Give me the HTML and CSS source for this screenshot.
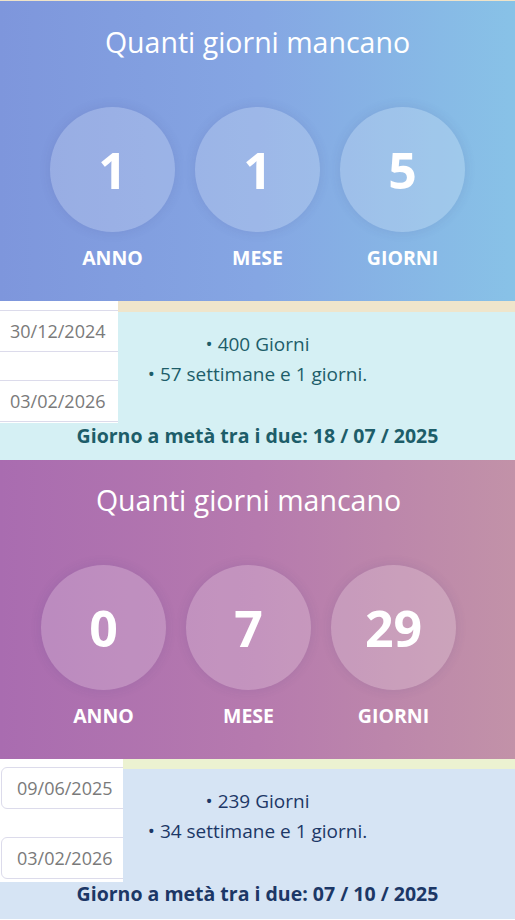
FILE: index.html
```html
<!DOCTYPE html>
<html lang="it">
  <head>
    <meta charset="UTF-8" />
    <meta name="viewport" content="width=device-width, initial-scale=1.0" />
    <title>Quanti giorni mancano</title>
    <link rel="stylesheet" href="styles.css">
  </head>
  <body>
    <section class="counter blue">
      <div class="counter-head">
        <h1>Quanti giorni mancano</h1>
        <div class="units">
          <div class="unit">
            <div class="circle">1</div>
            <span>Anno</span>
          </div>
          <div class="unit">
            <div class="circle">1</div>
            <span>Mese</span>
          </div>
          <div class="unit">
            <div class="circle">5</div>
            <span>Giorni</span>
          </div>
        </div>
      </div>
      <div class="result">
        <div class="dates">
          <input type="text" value="30/12/2024" readonly />
          <input type="text" value="03/02/2026" readonly />
        </div>
        <div class="result-body">
          <ul class="stats">
            <li>&bull; 400 Giorni</li>
            <li>&bull; 57 settimane e 1 giorni.</li>
          </ul>
          <p class="midpoint">Giorno a metà tra i due: 18 / 07 / 2025</p>
        </div>
      </div>
    </section>

    <section class="counter purple">
      <div class="counter-head">
        <h1>Quanti giorni mancano</h1>
        <div class="units">
          <div class="unit">
            <div class="circle">0</div>
            <span>Anno</span>
          </div>
          <div class="unit">
            <div class="circle">7</div>
            <span>Mese</span>
          </div>
          <div class="unit">
            <div class="circle">29</div>
            <span>Giorni</span>
          </div>
        </div>
      </div>
      <div class="result">
        <div class="dates">
          <input type="text" value="09/06/2025" readonly />
          <input type="text" value="03/02/2026" readonly />
        </div>
        <div class="result-body">
          <ul class="stats">
            <li>&bull; 239 Giorni</li>
            <li>&bull; 34 settimane e 1 giorni.</li>
          </ul>
          <p class="midpoint">Giorno a metà tra i due: 07 / 10 / 2025</p>
        </div>
      </div>
    </section>
  </body>
</html>
```

FILE: styles.css
```css
body {
  font-family: "Open Sans", "Noto Sans", sans-serif;
  margin: 0;
  padding: 0;
  border-top: 1px solid #efe3c8;
}
.counter-head {
  color: white;
  text-align: center;
  padding: 21px 0 33px;
}
.blue .counter-head {
  background: linear-gradient(to right, #7e96dc, #85a6e3 50%, #88c2e7);
}
.purple .counter-head {
  background: linear-gradient(to right, #a96cb0, #b67aae 50%, #c292a8);
  padding-right: 18px;
  padding-top: 20px;
}
h1 {
  margin: 0;
  font-size: 28.5px;
  font-weight: normal;
  line-height: 40px;
}
.units {
  display: flex;
  justify-content: center;
  gap: 20px;
  margin-top: 45px;
}
.unit {
  display: flex;
  flex-direction: column;
  align-items: center;
  gap: 16px;
}
.circle {
  width: 125px;
  height: 125px;
  border-radius: 50%;
  display: flex;
  align-items: center;
  justify-content: center;
  font-size: 50px;
  font-weight: bold;
  background: rgba(255, 255, 255, 0.2);
  box-shadow: 0 0 12px rgba(60, 60, 120, 0.12);
}
.unit span {
  font-size: 19.5px;
  font-weight: bold;
  line-height: 20px;
  text-transform: uppercase;
}
.result {
  position: relative;
  padding-top: 11px;
}
.blue .result {
  background: #efe5cb;
}
.purple .result {
  background: #ecf2d1;
  padding-top: 10px;
}
.dates {
  position: absolute;
  top: 0;
  left: 0;
  width: 118px;
  height: 122px;
  background: white;
  overflow: hidden;
  display: flex;
  flex-direction: column;
  gap: 28px;
  padding-top: 9px;
  box-sizing: border-box;
}
.purple .dates {
  width: 123px;
  height: 123px;
  padding-top: 8px;
}
.dates input {
  font-family: inherit;
  font-size: 18px;
  color: #7a7a7a;
  height: 42px;
  box-sizing: border-box;
  border: 1px solid #dcdbeb;
  padding: 0 15px;
  margin-left: -6px;
  width: 150px;
  outline: none;
}
.purple .dates input {
  margin-left: 1px;
  border-radius: 6px;
}
.result-body {
  text-align: center;
  padding: 17px 0 11px;
}
.blue .result-body {
  background: #d5f0f4;
  color: #1d5d69;
}
.purple .result-body {
  background: #d6e4f4;
  color: #1c3766;
}
.stats {
  list-style: none;
  margin: 0 0 34px;
  padding: 0;
  font-size: 19px;
  line-height: 30px;
}
.midpoint {
  margin: 0;
  font-size: 19.5px;
  font-weight: bold;
  line-height: 26px;
}
.purple .midpoint {
  line-height: 28px;
}
```
